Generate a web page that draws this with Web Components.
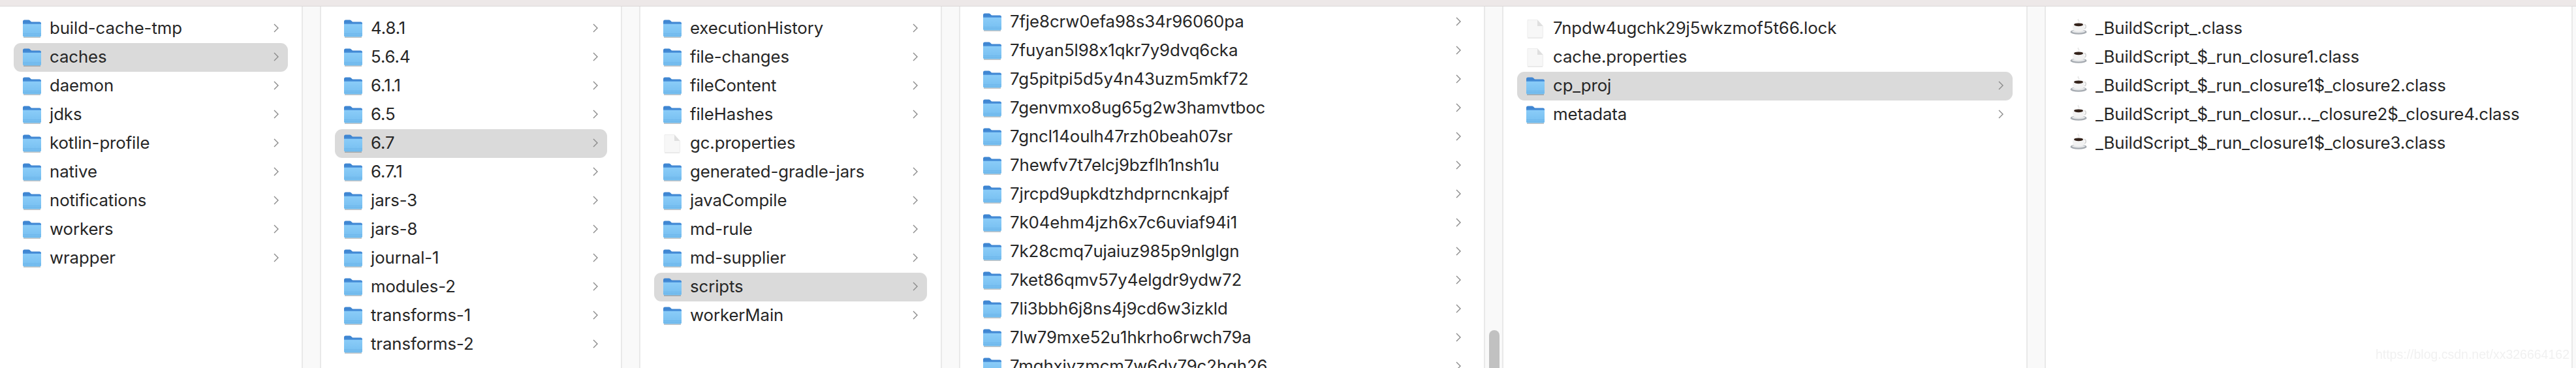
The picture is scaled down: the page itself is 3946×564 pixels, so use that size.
<!DOCTYPE html>
<html><head><meta charset="utf-8"><title>Finder</title>
<style>html,body{margin:0;background:#fff;height:100%;overflow:hidden}</style></head>
<body>
<fv-browser>
<fv-column style="--w:492px"><fv-row kind="folder" arrow>build-cache-tmp</fv-row><fv-row kind="folder" arrow selected>caches</fv-row><fv-row kind="folder" arrow>daemon</fv-row><fv-row kind="folder" arrow>jdks</fv-row><fv-row kind="folder" arrow>kotlin-profile</fv-row><fv-row kind="folder" arrow>native</fv-row><fv-row kind="folder" arrow>notifications</fv-row><fv-row kind="folder" arrow>workers</fv-row><fv-row kind="folder" arrow>wrapper</fv-row></fv-column>
<fv-column style="--w:489px"><fv-row kind="folder" arrow>4.8.1</fv-row><fv-row kind="folder" arrow>5.6.4</fv-row><fv-row kind="folder" arrow>6.1.1</fv-row><fv-row kind="folder" arrow>6.5</fv-row><fv-row kind="folder" arrow selected>6.7</fv-row><fv-row kind="folder" arrow>6.7.1</fv-row><fv-row kind="folder" arrow>jars-3</fv-row><fv-row kind="folder" arrow>jars-8</fv-row><fv-row kind="folder" arrow>journal-1</fv-row><fv-row kind="folder" arrow>modules-2</fv-row><fv-row kind="folder" arrow>transforms-1</fv-row><fv-row kind="folder" arrow>transforms-2</fv-row></fv-column>
<fv-column style="--w:490px"><fv-row kind="folder" arrow>executionHistory</fv-row><fv-row kind="folder" arrow>file-changes</fv-row><fv-row kind="folder" arrow>fileContent</fv-row><fv-row kind="folder" arrow>fileHashes</fv-row><fv-row kind="file">gc.properties</fv-row><fv-row kind="folder" arrow>generated-gradle-jars</fv-row><fv-row kind="folder" arrow>javaCompile</fv-row><fv-row kind="folder" arrow>md-rule</fv-row><fv-row kind="folder" arrow>md-supplier</fv-row><fv-row kind="folder" arrow selected>scripts</fv-row><fv-row kind="folder" arrow>workerMain</fv-row></fv-column>
<fv-column style="--w:832px;--top:2px" scrollbar><fv-row kind="folder" arrow>7fje8crw0efa98s34r96060pa</fv-row><fv-row kind="folder" arrow>7fuyan5l98x1qkr7y9dvq6cka</fv-row><fv-row kind="folder" arrow>7g5pitpi5d5y4n43uzm5mkf72</fv-row><fv-row kind="folder" arrow>7genvmxo8ug65g2w3hamvtboc</fv-row><fv-row kind="folder" arrow>7gncl14oulh47rzh0beah07sr</fv-row><fv-row kind="folder" arrow>7hewfv7t7elcj9bzflh1nsh1u</fv-row><fv-row kind="folder" arrow>7jrcpd9upkdtzhdprncnkajpf</fv-row><fv-row kind="folder" arrow>7k04ehm4jzh6x7c6uviaf94i1</fv-row><fv-row kind="folder" arrow>7k28cmq7ujaiuz985p9nlglgn</fv-row><fv-row kind="folder" arrow>7ket86qmv57y4elgdr9ydw72</fv-row><fv-row kind="folder" arrow>7li3bbh6j8ns4j9cd6w3izkld</fv-row><fv-row kind="folder" arrow>7lw79mxe52u1hkrho6rwch79a</fv-row><fv-row kind="folder" arrow>7mqhxjyzmcm7w6dy79c2hqh26</fv-row></fv-column>
<fv-column style="--w:831px"><fv-row kind="file">7npdw4ugchk29j5wkzmof5t66.lock</fv-row><fv-row kind="file">cache.properties</fv-row><fv-row kind="folder" arrow selected>cp_proj</fv-row><fv-row kind="folder" arrow>metadata</fv-row></fv-column>
<fv-column style="--w:812px"><fv-row kind="class">_BuildScript_.class</fv-row><fv-row kind="class">_BuildScript_$_run_closure1.class</fv-row><fv-row kind="class">_BuildScript_$_run_closure1$_closure2.class</fv-row><fv-row kind="class">_BuildScript_$_run_closur…_closure2$_closure4.class</fv-row><fv-row kind="class">_BuildScript_$_run_closure1$_closure3.class</fv-row></fv-column>
</fv-browser>
<script>
const icons={
folder:`<svg width="30" height="30" viewBox="0 0 30 30"><defs><linearGradient id="g" x1="0" y1="0" x2="0" y2="1"><stop offset="0" stop-color="#8accf8"/><stop offset="1" stop-color="#75bef0"/></linearGradient></defs><path d="M2 28h26" stroke="#000" stroke-opacity=".25" stroke-width="1.8"/><path d="M1 4Q1 1.5 3.5 1.5H10Q11.5 1.5 12.5 3T15 4.5H26.5Q29 4.5 29 7V12H1Z" fill="#3f86d2"/><path d="M1 7.5H29V25.5Q29 27.5 27 27.5H3Q1 27.5 1 25.5Z" fill="url(#g)"/><path d="M1 7H29" stroke="#4b93db" stroke-width="1.2"/><path d="M1 22.5H29M1 24.9H29" stroke="#5ea8e2" stroke-opacity=".5" stroke-width=".8"/></svg>`,
file:`<svg width="30" height="30" viewBox="0 0 30 30"><path d="M3 29H26" stroke="#000" stroke-opacity=".12" stroke-width="1.4"/><path d="M3 1.5H18L26.5 11V28Q26.5 28.7 25.8 28.7H3.7Q3 28.7 3 28Z" fill="#f7f7f7" stroke="#e6e6e6" stroke-width=".7"/><path d="M18 1.5V11H26.5Z" fill="#dfdfdf"/></svg>`,
class:`<svg width="30" height="30" viewBox="0 0 30 30"><ellipse cx="16" cy="20" rx="12.5" ry="3.8" fill="#a6abb1"/><ellipse cx="16" cy="19" rx="10" ry="2.6" fill="#e4e6e8"/><path d="M25 8.5a3.4 3.4 0 0 1 0 6.4" fill="none" stroke="#d5d5d5" stroke-width="1.6"/><path d="M7 8.5H25V13Q25 19.5 16 19.5T7 13Z" fill="#f2f2f2"/><ellipse cx="16" cy="8.5" rx="9" ry="3.4" fill="#f8f8f8"/><ellipse cx="16" cy="8.8" rx="7" ry="2.4" fill="#33221a"/><path d="M16 0q-1.5 1.3 0 2.6t0 1.8" fill="none" stroke="#e6e6e6" stroke-width="1.5"/></svg>`
};
customElements.define('fv-browser',class extends HTMLElement{constructor(){super();this.attachShadow({mode:'open'}).innerHTML=`<style>
:host{display:block;position:relative;width:3946px;height:564px;overflow:hidden;background:#f9f9f9;font-family:"Inter","Liberation Sans",sans-serif;color:#262626}
.top{height:9px;background:#ede8e8;border-bottom:1px solid #dcd9d9}
.cols{display:flex;height:554px;border-left:2px solid #e9e9e9;filter:blur(.45px)}
.mark{position:absolute;right:10px;bottom:9px;font:19.5px "Liberation Sans",sans-serif;color:#f1f1f1;filter:blur(.5px)}
</style><div class="top"></div><div class="cols"><slot></slot></div><div class="mark">https://blog.csdn.net/xx326664162</div>`}});
customElements.define('fv-column',class extends HTMLElement{constructor(){super();this.attachShadow({mode:'open'}).innerHTML=`<style>
:host{display:flex;flex:none;width:var(--w);height:100%;box-sizing:border-box;background:#f9f9f9;position:relative}
:host(:first-child){margin-left:-2px}
.list{flex:1;min-width:0;height:100%;box-sizing:border-box;background:#fff;border-right:2px solid #e9e9e9;padding:var(--top,12px) 21px 0 21px;overflow:hidden;display:flex;flex-direction:column}
.gutter{flex:none;width:26px;border-right:2px solid #e9e9e9;position:relative;box-sizing:content-box}
:host(:last-child) .gutter{width:5px;border-right:0}
.thumb{display:none;position:absolute;left:6px;top:496px;width:16px;height:80px;border-radius:8px;background:#c1c1c1}
:host([scrollbar]) .thumb{display:block}
</style><div class="list"><slot></slot></div><div class="gutter"><div class="thumb"></div></div>`}});
customElements.define('fv-row',class extends HTMLElement{constructor(){super();const k=this.getAttribute('kind');this.attachShadow({mode:'open'}).innerHTML=`<style>
:host{display:flex;flex:none;align-items:center;height:44px;border-radius:11px;padding:0 14px;box-sizing:border-box;font-size:25.8px;white-space:nowrap}
:host([selected]){background:#dadada}
.i{flex:none;width:30px;height:30px;margin-left:-1px;margin-right:12px;display:block}
.t{flex:1;min-width:0;letter-spacing:-.1px;padding-bottom:3px}
.a{flex:none;display:none;margin-bottom:2px}
:host([arrow]) .a{display:block}
</style><span class="i">${icons[k]}</span><span class="t"><slot></slot></span><svg class="a" width="8" height="14" viewBox="0 0 8 14"><path d="M1 1l6 6-6 6" fill="none" stroke="#8a8a8a" stroke-width="1.4"/></svg>`}});
</script>
</body></html>
